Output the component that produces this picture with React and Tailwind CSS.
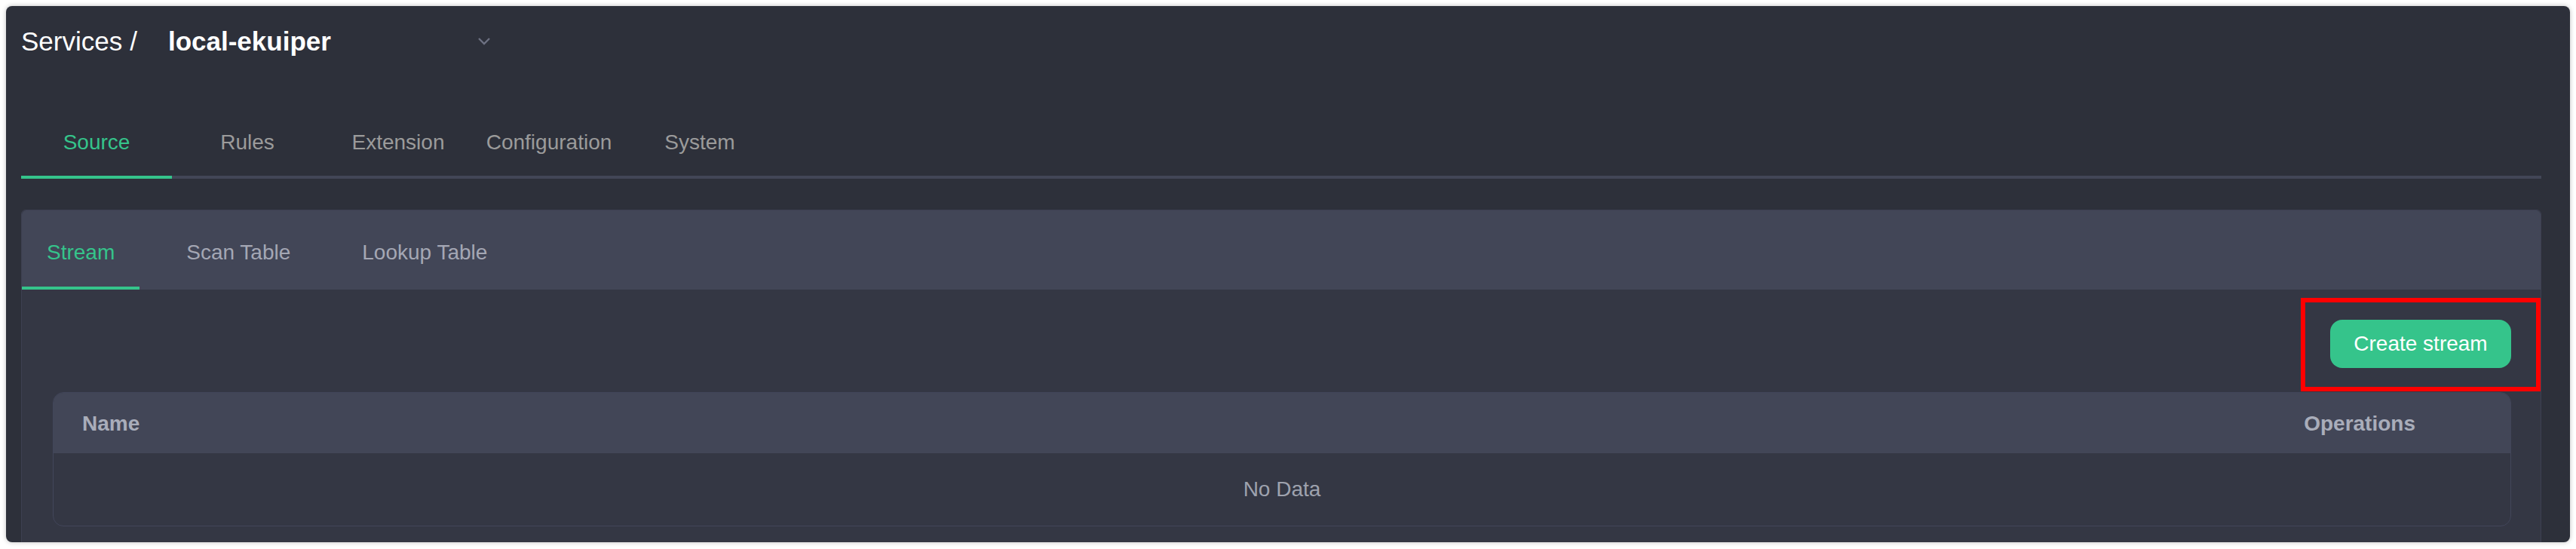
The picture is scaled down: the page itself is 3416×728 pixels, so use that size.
import React, { useState } from "react";

const topTabs = ["Source", "Rules", "Extension", "Configuration", "System"];
const sourceTabs = ["Stream", "Scan Table", "Lookup Table"];

function Chevron() {
  return (
    <svg width="18" height="12" viewBox="0 0 18 12" className="text-[#6d7182]">
      <path d="M2 2l7 7 7-7" fill="none" stroke="currentColor" strokeWidth="2.4" />
    </svg>
  );
}

export default function App() {
  const [tab, setTab] = useState(0);
  const [sub, setSub] = useState(0);

  return (
    <div className="h-[728px] w-[3416px] bg-white p-[8px] pb-[9px] font-['Liberation_Sans',Arial,sans-serif]">
      <div className="h-full w-full overflow-hidden rounded-[8px] bg-[#2d303a] pl-[20px] pr-[38px] shadow-[0_0_6px_rgba(0,0,0,0.25)]">
        {/* breadcrumb */}
        <div className="mt-[27px] flex h-[40px] items-center text-[35px] leading-[40px] text-white">
          <span>Services</span>
          <span className="ml-[10px]">/</span>
          <div className="ml-[41px] flex w-[432px] items-center justify-between pr-[4px]">
            <span className="font-bold">local-ekuiper</span>
            <Chevron />
          </div>
        </div>

        {/* top tabs */}
        <div className="mt-[94px] flex border-b-[4px] border-[#424657]">
          {topTabs.map((t, i) => (
            <button
              key={t}
              onClick={() => setTab(i)}
              className={
                "-mb-[4px] w-[200px] border-b-[4px] pb-[24px] text-center text-[28px] leading-[40px] " +
                (tab === i ? "border-[#35c48b] text-[#35c48b]" : "border-transparent text-[#9b9b9b]")
              }
            >
              {t}
            </button>
          ))}
        </div>

        {/* card */}
        <div className="mt-[41px] h-[460px] rounded-t-[6px] border border-[#3d4051] bg-[#343744]">
          <div className="flex h-[105px] gap-[29px] rounded-t-[6px] bg-[#424657] pt-[36px]">
            {sourceTabs.map((t, i) => (
              <button
                key={t}
                onClick={() => setSub(i)}
                className={
                  "border-b-[4px] px-[33px] pb-[25px] text-[28px] leading-[40px] " +
                  (sub === i ? "border-[#35c48b] text-[#35c48b]" : "border-transparent text-[#a4a7b4]")
                }
              >
                {t}
              </button>
            ))}
          </div>

          <div className="pl-[41px] pr-[39px]">
            <div className="mt-[40px] flex justify-end">
              <div className="relative">
                <button className="h-[64px] w-[240px] rounded-[16px] bg-[#35c48b] text-[28px] text-white">
                  Create stream
                </button>
                <div className="absolute -bottom-[31px] -left-[39px] -right-[39px] -top-[29px] border-[6px] border-[#ff0000]" />
              </div>
            </div>

            <div className="mt-[32px] overflow-hidden rounded-[14px] border border-[#42465a]">
              <div className="flex h-[80px] items-center justify-between bg-[#424657] pl-[38px] pr-[126px] pt-[2px] text-[28px] font-bold text-[#a9adba]">
                <span>Name</span>
                <span>Operations</span>
              </div>
              <div className="flex h-[96px] items-center justify-center text-[28px] text-[#9ea2ae]">No Data</div>
            </div>
          </div>
        </div>
      </div>
    </div>
  );
}
